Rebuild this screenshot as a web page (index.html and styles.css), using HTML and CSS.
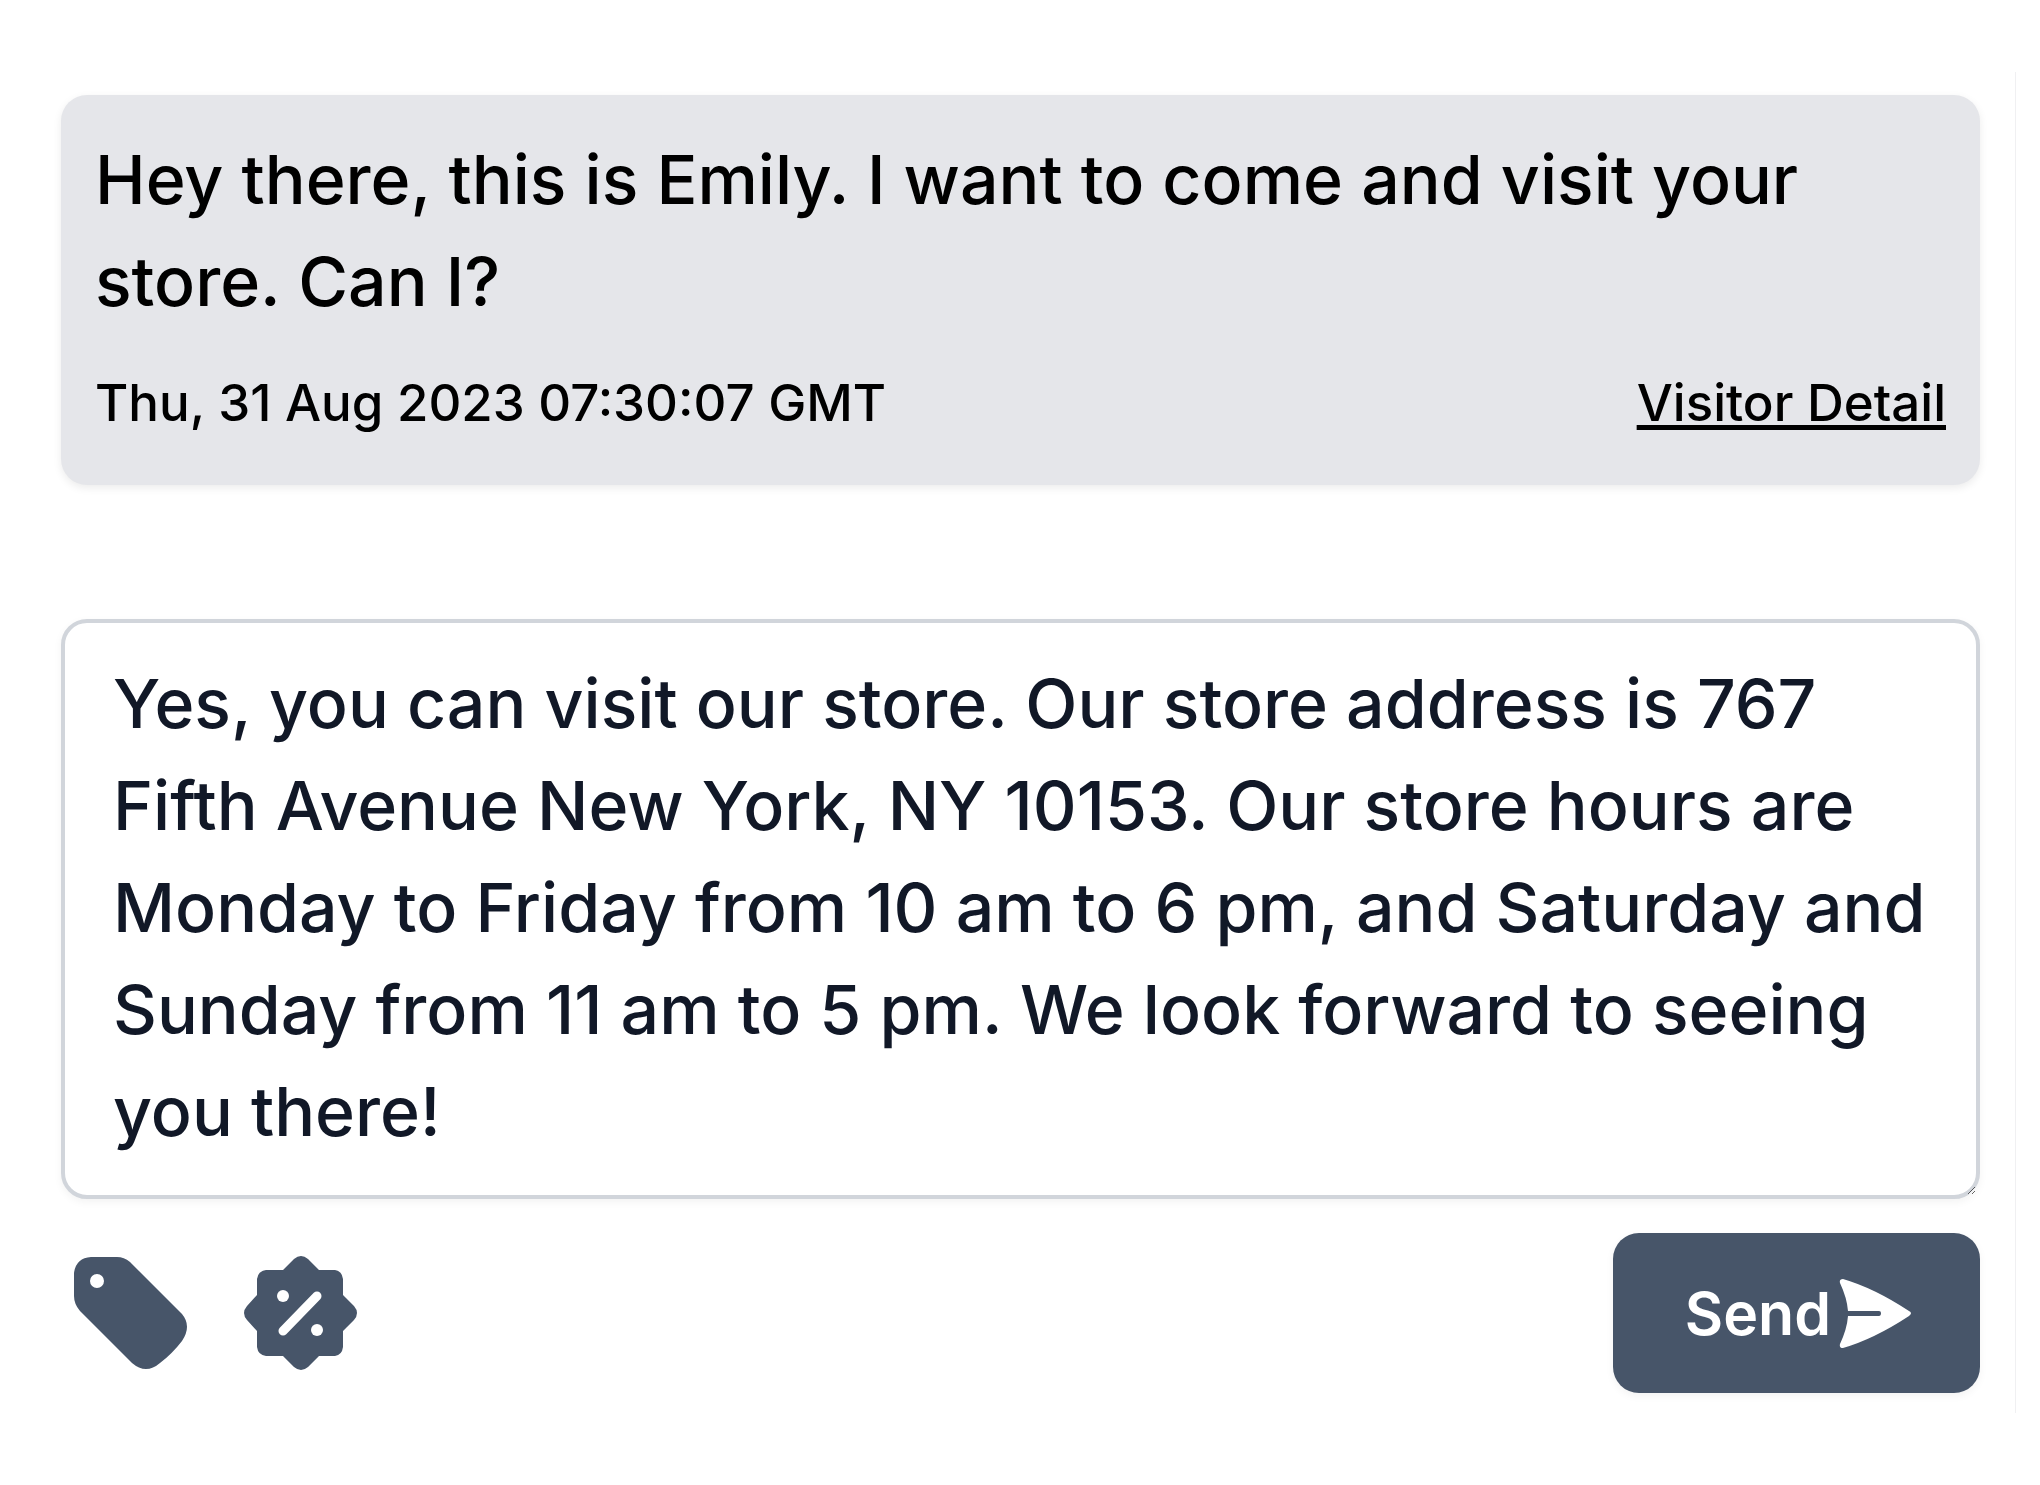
FILE: index.html
```html
<!DOCTYPE html>
<html lang="en">
<head>
    <meta charset="UTF-8">
    <meta name="viewport" content="width=device-width, initial-scale=1.0">
    <title>Visitor Chat</title>
    <link rel="stylesheet" href="styles.css">
</head>
<body>
    <main class="chat-panel">
        <article class="message">
            <p class="message-text">Hey there, this is Emily. I want to come and visit your store. Can I?</p>
            <div class="message-footer">
                <time datetime="2023-08-31T07:30:07Z">Thu, 31 Aug 2023 07:30:07 GMT</time>
                <a href="#visitor">Visitor Detail</a>
            </div>
        </article>

        <form class="reply-form">
            <textarea class="reply-text" rows="5" aria-label="Reply" spellcheck="false">Yes, you can visit our store. Our store address is 767 Fifth Avenue New York, NY 10153. Our store hours are Monday to Friday from 10 am to 6 pm, and Saturday and Sunday from 11 am to 5 pm. We look forward to seeing you there!</textarea>
            <div class="toolbar">
                <div class="tools">
                    <button type="button" class="icon-btn" aria-label="Add tag">
                        <svg viewBox="0 0 114 114" fill="currentColor" fill-rule="evenodd">
                            <path d="M17 1H43Q50 1 56 6L108 58Q118 70 108 85Q98 98 86 107Q72 119 58 107L6 55Q0 48 0 40V17Q2 2 17 1ZM23 18a7 7 0 1 0 0 14a7 7 0 1 0 0-14Z"/>
                        </svg>
                    </button>
                    <button type="button" class="icon-btn" aria-label="Add discount">
                        <svg viewBox="0 0 114 114">
                            <path fill="currentColor" d="M39 14L50 3Q57-3 64 3L75 14H91Q98 15 99 23V39L110 50Q116 57 110 64L99 75V91Q98 99 91 100H75L64 111Q57 117 50 111L39 100H22Q14 99 13 91V75L3 64Q-3 57 3 50L13 39V23Q14 15 22 14Z"/>
                            <path stroke="#fff" stroke-width="9" stroke-linecap="round" d="M39 75L73 40"/>
                            <circle cx="39" cy="40" r="6" fill="#fff"/>
                            <circle cx="73" cy="74" r="6" fill="#fff"/>
                        </svg>
                    </button>
                </div>
                <button type="submit" class="send-btn">
                    Send
                    <svg viewBox="0 0 72 69" fill="currentColor">
                        <path d="M4 0Q35 9 70 32Q74 34 70 37Q35 60 4 69Q0 69 1 65Q8 50 9 37H40Q42 37 42 34Q42 32 40 32H9Q8 19 1 4Q0 0 4 0Z"/>
                    </svg>
                </button>
            </div>
        </form>
    </main>
</body>
</html>
```

FILE: styles.css
```css
* {
    box-sizing: border-box;
}
body {
    margin: 0;
    padding: 72px 24px 70px 0;
    background: #fff;
    color: #000;
    font-family: Inter, sans-serif;
    font-weight: 500;
}
.chat-panel {
    padding: 23px 35px 20px 61px;
    border-right: 1px solid #f0f0f2;
}
.message {
    padding: 33px 34px 44px;
    margin-bottom: 134px;
    background: #e5e6ea;
    border-radius: 26px;
    box-shadow: 0 3px 8px rgba(0, 0, 0, 0.08);
}
.message-text {
    margin: 0 0 33px;
    font-size: 68px;
    line-height: 102px;
}
.message-footer {
    display: flex;
    justify-content: space-between;
    font-size: 51px;
    line-height: 76px;
}
.message-footer a {
    color: inherit;
    text-decoration-thickness: 5px;
    text-underline-offset: 4px;
    text-decoration-skip-ink: none;
}
.reply-text {
    display: block;
    width: 100%;
    margin: 0;
    padding: 29px 48px 33px;
    border: 4px solid #d1d5db;
    border-radius: 26px;
    background: #fff;
    box-shadow: 0 3px 8px rgba(0, 0, 0, 0.05);
    color: #111827;
    font: inherit;
    font-size: 68px;
    line-height: 102px;
    overflow: hidden;
    resize: vertical;
    outline: none;
}
.toolbar {
    display: flex;
    justify-content: space-between;
    align-items: center;
    padding-top: 34px;
}
.tools {
    display: flex;
    gap: 56px;
    padding-left: 13px;
}
.icon-btn {
    padding: 0;
    border: 0;
    background: none;
    color: #475569;
    cursor: pointer;
}
.icon-btn svg {
    display: block;
    width: 114px;
    height: 114px;
}
.send-btn {
    display: flex;
    align-items: center;
    gap: 8px;
    height: 160px;
    padding: 0 69px 0 72px;
    border: 0;
    border-radius: 26px;
    background: #475569;
    box-shadow: 0 3px 8px rgba(0, 0, 0, 0.05);
    color: #fff;
    font: inherit;
    font-size: 59px;
    font-weight: 600;
    cursor: pointer;
}
.send-btn svg {
    width: 72px;
    height: 69px;
}
```
